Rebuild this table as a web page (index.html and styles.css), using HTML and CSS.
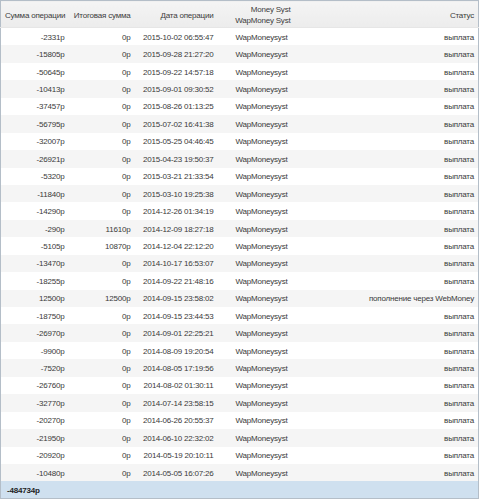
FILE: index.html
```html
<!DOCTYPE html>
<html>
<head>
<meta charset="utf-8">
<link rel="stylesheet" href="styles.css">
</head>
<body>
<table class="ops">
  <colgroup>
    <col class="c1"><col class="c2"><col class="c3"><col class="c4"><col class="c5">
  </colgroup>
  <thead>
    <tr>
      <th>Сумма операции</th>
      <th>Итоговая сумма</th>
      <th>Дата операции</th>
      <th>Money Syst<br>WapMoney Syst</th>
      <th>Статус</th>
    </tr>
  </thead>
  <tbody>
    <tr><td>-2331р</td><td>0р</td><td>2015-10-02 06:55:47</td><td class="sys">WapMoneysyst</td><td>выплата</td></tr>
    <tr><td>-15805р</td><td>0р</td><td>2015-09-28 21:27:20</td><td class="sys">WapMoneysyst</td><td>выплата</td></tr>
    <tr><td>-50645р</td><td>0р</td><td>2015-09-22 14:57:18</td><td class="sys">WapMoneysyst</td><td>выплата</td></tr>
    <tr><td>-10413р</td><td>0р</td><td>2015-09-01 09:30:52</td><td class="sys">WapMoneysyst</td><td>выплата</td></tr>
    <tr><td>-37457р</td><td>0р</td><td>2015-08-26 01:13:25</td><td class="sys">WapMoneysyst</td><td>выплата</td></tr>
    <tr><td>-56795р</td><td>0р</td><td>2015-07-02 16:41:38</td><td class="sys">WapMoneysyst</td><td>выплата</td></tr>
    <tr><td>-32007р</td><td>0р</td><td>2015-05-25 04:46:45</td><td class="sys">WapMoneysyst</td><td>выплата</td></tr>
    <tr><td>-26921р</td><td>0р</td><td>2015-04-23 19:50:37</td><td class="sys">WapMoneysyst</td><td>выплата</td></tr>
    <tr><td>-5320р</td><td>0р</td><td>2015-03-21 21:33:54</td><td class="sys">WapMoneysyst</td><td>выплата</td></tr>
    <tr><td>-11840р</td><td>0р</td><td>2015-03-10 19:25:38</td><td class="sys">WapMoneysyst</td><td>выплата</td></tr>
    <tr><td>-14290р</td><td>0р</td><td>2014-12-26 01:34:19</td><td class="sys">WapMoneysyst</td><td>выплата</td></tr>
    <tr><td>-290р</td><td>11610р</td><td>2014-12-09 18:27:18</td><td class="sys">WapMoneysyst</td><td>выплата</td></tr>
    <tr><td>-5105р</td><td>10870р</td><td>2014-12-04 22:12:20</td><td class="sys">WapMoneysyst</td><td>выплата</td></tr>
    <tr><td>-13470р</td><td>0р</td><td>2014-10-17 16:53:07</td><td class="sys">WapMoneysyst</td><td>выплата</td></tr>
    <tr><td>-18255р</td><td>0р</td><td>2014-09-22 21:48:16</td><td class="sys">WapMoneysyst</td><td>выплата</td></tr>
    <tr><td>12500р</td><td>12500р</td><td>2014-09-15 23:58:02</td><td class="sys">WapMoneysyst</td><td>пополнение через WebMoney</td></tr>
    <tr><td>-18750р</td><td>0р</td><td>2014-09-15 23:44:53</td><td class="sys">WapMoneysyst</td><td>выплата</td></tr>
    <tr><td>-26970р</td><td>0р</td><td>2014-09-01 22:25:21</td><td class="sys">WapMoneysyst</td><td>выплата</td></tr>
    <tr><td>-9900р</td><td>0р</td><td>2014-08-09 19:20:54</td><td class="sys">WapMoneysyst</td><td>выплата</td></tr>
    <tr><td>-7520р</td><td>0р</td><td>2014-08-05 17:19:56</td><td class="sys">WapMoneysyst</td><td>выплата</td></tr>
    <tr><td>-26760р</td><td>0р</td><td>2014-08-02 01:30:11</td><td class="sys">WapMoneysyst</td><td>выплата</td></tr>
    <tr><td>-32770р</td><td>0р</td><td>2014-07-14 23:58:15</td><td class="sys">WapMoneysyst</td><td>выплата</td></tr>
    <tr><td>-20270р</td><td>0р</td><td>2014-06-26 20:55:37</td><td class="sys">WapMoneysyst</td><td>выплата</td></tr>
    <tr><td>-21950р</td><td>0р</td><td>2014-06-10 22:32:02</td><td class="sys">WapMoneysyst</td><td>выплата</td></tr>
    <tr><td>-20920р</td><td>0р</td><td>2014-05-19 20:10:11</td><td class="sys">WapMoneysyst</td><td>выплата</td></tr>
    <tr><td>-10480р</td><td>0р</td><td>2014-05-05 16:07:26</td><td class="sys">WapMoneysyst</td><td>выплата</td></tr>
  </tbody>
  <tfoot>
    <tr><td class="total">-484734р</td><td></td><td></td><td></td><td></td></tr>
  </tfoot>
</table>
</body>
</html>
```
FILE: styles.css
```css
html, body {
  margin: 0;
  padding: 0;
  background: #fff;
}
.ops {
  width: 478px;
  table-layout: fixed;
  border-collapse: collapse;
  border: 1px solid #b4bec8;
  font-family: "Liberation Sans", Arial, sans-serif;
  font-size: 8px;
  letter-spacing: -0.2px;
  color: #3a3a3a;
}
.c1 { width: 68px; }
.c2 { width: 66px; }
.c3 { width: 83px; }
.c4 { width: 77px; }
.c5 { width: 184px; }
.ops th {
  font-weight: normal;
  color: #3c3c3c;
  background: linear-gradient(#f4f4f4, #ececec);
  height: 24px;
  padding: 2px 4px 0;
  line-height: 11px;
  white-space: nowrap;
  text-align: right;
  border-bottom: 1px solid #e6e6e6;
}
.ops td {
  height: 16.44px;
  padding: 1px 4px 0;
  line-height: 11px;
  white-space: nowrap;
  text-align: right;
  color: #3a3a3a;
}
.ops td.sys {
  text-align: left;
  padding-left: 18px;
}
.ops tbody tr:nth-child(even) td { background: #f5f5f5; }
.ops tbody tr:nth-child(odd) td { background: #fff; }
.ops tfoot td {
  background: #cfe0ef;
  height: 16px;
}
.ops .total {
  font-weight: bold;
  color: #222;
  text-align: left;
  padding-left: 6px;
}
```
